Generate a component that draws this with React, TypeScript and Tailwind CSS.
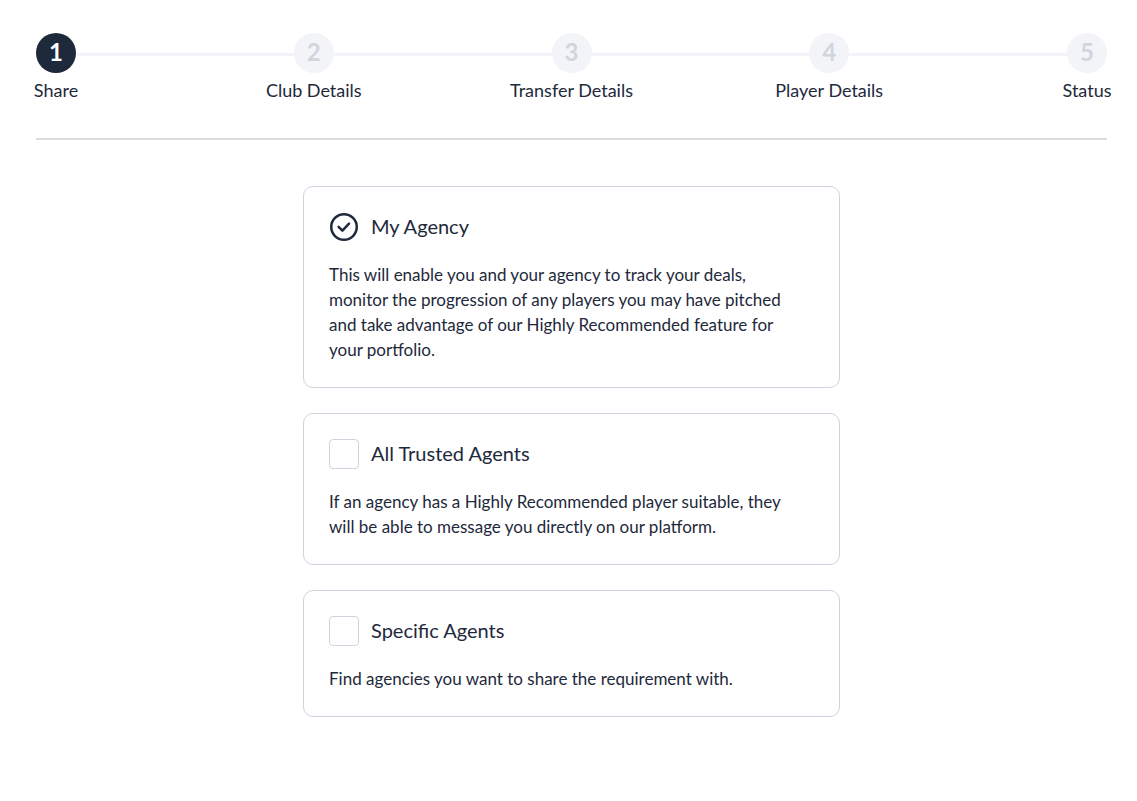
const steps = ['Share', 'Club Details', 'Transfer Details', 'Player Details', 'Status'];

const options = [
  {
    id: 'my-agency',
    title: 'My Agency',
    text: 'This will enable you and your agency to track your deals, monitor the progression of any players you may have pitched and take advantage of our Highly Recommended feature for your portfolio.',
    fixed: true,
  },
  {
    id: 'trusted-agents',
    title: 'All Trusted Agents',
    text: 'If an agency has a Highly Recommended player suitable, they will be able to message you directly on our platform.',
    fixed: false,
  },
  {
    id: 'specific-agents',
    title: 'Specific Agents',
    text: 'Find agencies you want to share the requirement with.',
    fixed: false,
  },
];

function CheckCircle() {
  return (
    <svg
      viewBox="0 0 30 30"
      className="size-[30px] shrink-0"
      fill="none"
      stroke="#1e293b"
      strokeWidth="2.5"
      strokeLinecap="round"
      strokeLinejoin="round"
      aria-hidden="true"
    >
      <circle cx="15" cy="15" r="12.75" />
      <path d="M9.6 14.9l3.8 3.7 6.6-7" />
    </svg>
  );
}

function Stepper() {
  return (
    <ol className="flex justify-between">
      {steps.map((label, i) => (
        <li key={label} className={i < steps.length - 1 ? 'flex flex-1 items-start' : 'flex items-start'}>
          <div className="flex w-10 shrink-0 flex-col items-center">
            <span
              className={
                i === 0
                  ? 'flex size-10 items-center justify-center rounded-full bg-[#1e293b] pb-0.5 text-2xl font-bold text-white'
                  : 'flex size-10 items-center justify-center rounded-full bg-[#f3f4f8] pb-0.5 text-2xl font-bold text-[#d1d5de]'
              }
            >
              {i + 1}
            </span>
            <span className="mt-1 text-lg leading-[26px] whitespace-nowrap">{label}</span>
          </div>
          {i < steps.length - 1 && <div className="mt-5 h-[3px] flex-1 bg-[#f3f4f8]" />}
        </li>
      ))}
    </ol>
  );
}

export default function App() {
  return (
    <main className="min-h-screen bg-white pt-[33px] pr-[30px] pl-9 font-['Lato',sans-serif] text-[#1e293b]">
      <Stepper />
      <hr className="mt-[35px] border-t-2 border-[#dcdcdc]" />
      <div className="mx-auto mt-[46px] flex max-w-[537px] flex-col gap-[25px]">
        {options.map((o) => (
          <section key={o.id} className="rounded-[10px] border border-[#d1d3df] p-[25px]">
            <label htmlFor={o.id} className="flex items-center gap-3 text-xl leading-[30px]">
              {o.fixed ? (
                <>
                  <input id={o.id} type="checkbox" defaultChecked className="peer sr-only" />
                  <CheckCircle />
                </>
              ) : (
                <input
                  id={o.id}
                  type="checkbox"
                  className="size-[30px] shrink-0 appearance-none rounded-[4px] border border-[#d1d3df] bg-white checked:bg-[#1e293b]"
                />
              )}
              <span className="leading-7 pb-0.5">{o.title}</span>
            </label>
            <p className="mt-5 pr-4 text-[17px] leading-[25px]">{o.text}</p>
          </section>
        ))}
      </div>
    </main>
  );
}
